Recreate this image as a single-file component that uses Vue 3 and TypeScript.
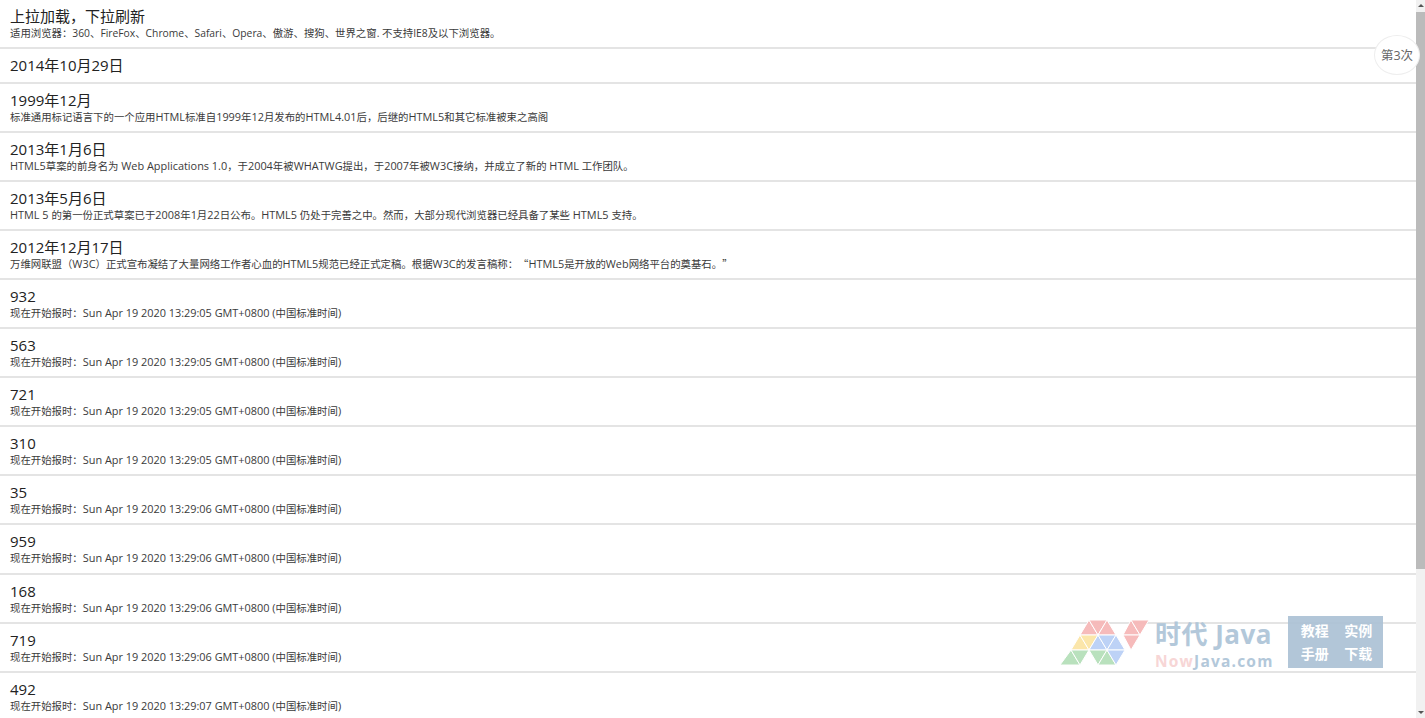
<script setup lang="ts">
interface Row {
  title: string;
  desc?: string;
  narrow?: boolean;
}

const stamp = (n: number) => `现在开始报时：Sun Apr 19 2020 13:29:0${n} GMT+0800 (中国标准时间)`;

const rows: Row[] = [
  { title: "上拉加载，下拉刷新", desc: "适用浏览器：360、FireFox、Chrome、Safari、Opera、傲游、搜狗、世界之窗. 不支持IE8及以下浏览器。", narrow: true },
  { title: "2014年10月29日" },
  { title: "1999年12月", desc: "标准通用标记语言下的一个应用HTML标准自1999年12月发布的HTML4.01后，后继的HTML5和其它标准被束之高阁" },
  { title: "2013年1月6日", desc: "HTML5草案的前身名为 Web Applications 1.0，于2004年被WHATWG提出，于2007年被W3C接纳，并成立了新的 HTML 工作团队。" },
  { title: "2013年5月6日", desc: "HTML 5 的第一份正式草案已于2008年1月22日公布。HTML5 仍处于完善之中。然而，大部分现代浏览器已经具备了某些 HTML5 支持。" },
  { title: "2012年12月17日", desc: "万维网联盟（W3C）正式宣布凝结了大量网络工作者心血的HTML5规范已经正式定稿。根据W3C的发言稿称：“HTML5是开放的Web网络平台的奠基石。”" },
  { title: "932", desc: stamp(5) },
  { title: "563", desc: stamp(5) },
  { title: "721", desc: stamp(5) },
  { title: "310", desc: stamp(5) },
  { title: "35", desc: stamp(6) },
  { title: "959", desc: stamp(6) },
  { title: "168", desc: stamp(6) },
  { title: "719", desc: stamp(6) },
  { title: "492", desc: stamp(7) },
];

// latin runs are a touch larger than the CJK ones in the small line
const runs = (text: string) => text.match(/[\x00-\x7f]+|[^\x00-\x7f]+/g) ?? [];
const isLatin = (run: string) => run.charCodeAt(0) < 128;

const PINK = "#f6b8b8";
const YELLOW = "#fbe5a6";
const BLUE = "#bad0f6";
const GREEN = "#b6e0ba";

const logo = [
  { points: "20,15 38,15 29,0", fill: PINK },
  { points: "29,0 47,0 38,15", fill: PINK },
  { points: "38,15 56,15 47,0", fill: PINK },
  { points: "63,15 80,15 71,0", fill: PINK },
  { points: "71,0 89,0 80,15", fill: PINK },
  { points: "63,15 80,15 71,30", fill: PINK },
  { points: "11,30 29,30 20,15", fill: YELLOW },
  { points: "20,15 38,15 29,30", fill: YELLOW },
  { points: "29,30 47,30 38,15", fill: BLUE },
  { points: "38,15 56,15 47,30", fill: BLUE },
  { points: "47,30 65,30 56,15", fill: BLUE },
  { points: "0,45 20,45 11,30", fill: GREEN },
  { points: "11,30 29,30 20,45", fill: GREEN },
  { points: "29,30 47,30 38,45", fill: GREEN },
  { points: "38,45 56,45 47,30", fill: GREEN },
  { points: "47,30 65,30 56,45", fill: BLUE },
];
</script>

<template>
  <div class="page">
    <main class="list">
      <div v-for="row in rows" :key="row.title" class="row" :class="{ single: !row.desc }">
        <div class="title">{{ row.title }}</div>
        <div v-if="row.desc" class="desc" :class="{ narrow: row.narrow }">
          <span v-for="(run, i) in runs(row.desc)" :key="i" :class="{ latin: isLatin(run) }">{{ run }}</span>
        </div>
      </div>
    </main>
    <aside class="scrollbar">
      <span class="arrow up"></span>
      <div class="track"><div class="thumb"></div></div>
      <span class="arrow down"></span>
    </aside>

    <div class="bubble">第3次</div>

    <div class="mark">
      <svg class="mark-logo" width="90" height="46" viewBox="0 0 90 46">
        <polygon v-for="(t, i) in logo" :key="i" :points="t.points" :fill="t.fill" stroke="#fff" stroke-width="1" />
      </svg>
      <div class="mark-name">
        <div class="mark-cn">时代 Java</div>
        <div class="mark-en"><span>Now</span>Java.com</div>
      </div>
      <div class="mark-box">
        <span>教程</span><span>实例</span><span>手册</span><span>下载</span>
      </div>
    </div>
  </div>
</template>

<style scoped>
.page {
  position: relative;
  display: flex;
  height: 718px;
  overflow: hidden;
  background: #fff;
  color: #333;
  font-family: "Open Sans", "Noto Sans CJK SC", sans-serif;
}
.list {
  flex: 1;
  min-width: 0;
}
.row {
  box-sizing: border-box;
  height: 49.1px;
  padding: 7px 10px 0;
  border-bottom: 2px solid #e4e4e4;
  overflow: hidden;
}
.row.single {
  height: 34.5px;
}
.title {
  font-size: 15px;
  line-height: 19px;
  color: #222;
}
.desc {
  font-family: "Noto Sans CJK SC", sans-serif;
  font-size: 10.4px;
  line-height: 13px;
  color: #3a3a3a;
  white-space: nowrap;
  text-spacing-trim: space-all;
}
.latin {
  font-family: "Open Sans", sans-serif;
  font-size: 10.9px;
}
.narrow .latin {
  font-size: 10.3px;
}
.scrollbar {
  flex: none;
  width: 9px;
  display: flex;
  flex-direction: column;
  align-items: center;
  background: #f1f1f1;
}
.arrow {
  flex: none;
  width: 0;
  height: 0;
  border-left: 3px solid transparent;
  border-right: 3px solid transparent;
}
.arrow.up {
  margin: 4px 0 5px;
  border-bottom: 3px solid #555;
}
.arrow.down {
  margin: 5px 0 4px;
  border-top: 3px solid #555;
}
.track {
  flex: 1;
  width: 100%;
}
.thumb {
  height: 557px;
  background: #bbb;
}
.bubble {
  position: absolute;
  top: 35px;
  left: 1374px;
  box-sizing: border-box;
  width: 46px;
  height: 40px;
  border: 1px solid #eee;
  border-radius: 50%;
  background: #fff;
  font-size: 12.5px;
  line-height: 40px;
  text-align: center;
  color: #666;
}
.mark {
  position: absolute;
  left: 1060px;
  top: 616px;
  display: flex;
  align-items: flex-start;
  opacity: 0.95;
}
.mark-logo {
  flex: none;
  margin-top: 4px;
}
.mark-name {
  width: 118px;
  margin-left: 6px;
  font-weight: 700;
  white-space: nowrap;
}
.mark-cn {
  margin-top: 1px;
  margin-left: -1px;
  font-size: 26px;
  line-height: 34px;
  letter-spacing: 0.5px;
  color: #afc6d9;
}
.mark-en {
  margin-left: -1px;
  font-size: 15.5px;
  line-height: 20px;
  letter-spacing: 1.2px;
  color: #afc6d9;
}
.mark-en span {
  color: #f7d4d4;
}
.mark-box {
  flex: none;
  display: grid;
  grid-template-columns: 1fr 1fr;
  box-sizing: border-box;
  width: 95px;
  height: 52px;
  margin-left: 14px;
  padding: 3px 10px 4px 12px;
  column-gap: 14px;
  background: #aec3d6;
  color: #fff;
  font-size: 14px;
  font-weight: 700;
  line-height: 23px;
  text-align: center;
}
</style>

<style>
html,
body {
  margin: 0;
  overflow: hidden;
}
</style>
